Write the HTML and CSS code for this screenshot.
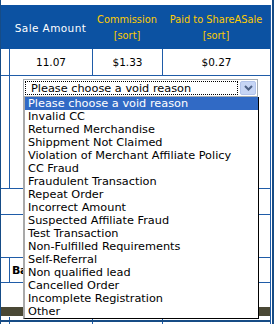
FILE: index.html
```html
<!DOCTYPE html>
<html lang="en">
<head>
	<meta charset="UTF-8">
	<title>Void Transaction</title>
	<link rel="stylesheet" href="styles.css">
</head>
<body>
	<div class="frame">
		<div class="grid">
			<div class="row head">
				<div class="cell c0"></div>
				<div class="cell c1"><span class="head__plain">Sale Amount</span></div>
				<div class="cell c2"><a class="head__sort">Commission<br>[sort]</a></div>
				<div class="cell c3"><a class="head__sort">Paid to ShareASale<br>[sort]</a></div>
			</div>
			<div class="row data">
				<div class="cell c0"></div>
				<div class="cell c1">11.07</div>
				<div class="cell c2">$1.33</div>
				<div class="cell c3">$0.27</div>
			</div>
			<div class="row void">
				<div class="cell c0"></div>
				<div class="cell wide">
					<div class="select">
						<div class="select__value">Please choose a void reason</div>
						<div class="select__btn">
							<svg width="9" height="6" viewBox="0 0 9 6"><path d="M1 1 L4.5 4.5 L8 1" fill="none" stroke="#4d6185" stroke-width="2"/></svg>
						</div>
					</div>
				</div>
			</div>
			<div class="row blank r3"></div>
			<div class="row blank r4"></div>
			<div class="row total">
				<div class="cell c0"></div>
				<div class="cell wide total__cell"><span class="total__label">Ba</span></div>
			</div>
			<div class="row blank r6"></div>
			<div class="bar"></div>
			<div class="row tail tail--first">
				<div class="cell c0"></div>
				<div class="cell c1"></div>
				<div class="cell c2"></div>
				<div class="cell c3"></div>
			</div>
			<div class="row tail">
				<div class="cell c0"></div>
				<div class="cell c1"></div>
				<div class="cell c2"></div>
				<div class="cell c3"></div>
			</div>
		</div>

		<ul class="options">
			<li class="options__item options__item--active">Please choose a void reason</li>
			<li class="options__item">Invalid CC</li>
			<li class="options__item">Returned Merchandise</li>
			<li class="options__item">Shippment Not Claimed</li>
			<li class="options__item">Violation of Merchant Affiliate Policy</li>
			<li class="options__item">CC Fraud</li>
			<li class="options__item">Fraudulent Transaction</li>
			<li class="options__item">Repeat Order</li>
			<li class="options__item">Incorrect Amount</li>
			<li class="options__item">Suspected Affiliate Fraud</li>
			<li class="options__item">Test Transaction</li>
			<li class="options__item">Non-Fulfilled Requirements</li>
			<li class="options__item">Self-Referral</li>
			<li class="options__item">Non qualified lead</li>
			<li class="options__item">Cancelled Order</li>
			<li class="options__item">Incomplete Registration</li>
			<li class="options__item">Other</li>
		</ul>
	</div>
</body>
</html>
```

FILE: styles.css
```css
* {
	box-sizing: border-box;
}
body {
	margin: 0;
	background-color: #fff;
	font-family: "DejaVu Sans", Verdana, sans-serif;
	color: #000;
	overflow: hidden;
}
.frame {
	position: relative;
	width: 274px;
	height: 324px;
	padding-top: 5px;
	border-left: 1px solid #164c86;
	border-right: 2px solid #164c86;
	padding-right: 1px;
}
.grid {
	width: 270px;
	border-right: 1px solid #1f5ca8;
}
.row {
	display: flex;
	border-bottom: 1px solid #1f5ca8;
}
.cell {
	height: 100%;
	display: flex;
	align-items: center;
	justify-content: center;
	text-align: center;
}
.cell + .cell {
	border-left: 1px solid #1f5ca8;
}
.c0 {
	width: 8px;
}
.c1 {
	width: 83px;
}
.c2 {
	width: 70px;
}
.c3 {
	width: 108px;
}
.wide {
	flex: 1;
}

/* header */
.head {
	height: 44px;
	background-color: #0c52a2;
	border-bottom: none;
}
.head .cell + .cell {
	border-left: none;
}
.head__plain {
	color: #fff;
	font-size: 10.5px;
	letter-spacing: 0.4px;
	padding-top: 1px;
}
.head__sort {
	color: #ffcc00;
	font-size: 9.8px;
	line-height: 16px;
	padding-top: 2px;
}

/* rows */
.data {
	height: 27px;
	font-size: 10.5px;
}
.void {
	height: 113px;
}
.void .wide {
	align-items: flex-start;
	justify-content: flex-start;
}
.r3 {
	height: 26px;
}
.r4 {
	height: 43px;
}
.total {
	height: 25px;
}
.total__cell {
	justify-content: flex-start;
	padding-left: 2px;
}
.total__label {
	font-size: 11px;
	font-weight: bold;
	letter-spacing: -0.5px;
	white-space: nowrap;
}
.r6 {
	height: 24px;
	border-bottom: none;
}
.bar {
	height: 9px;
	background-color: #4a4835;
	margin-bottom: 1px;
}
.tail {
	height: 10px;
	border-bottom: none;
}
.tail--first {
	height: 5px;
	border-bottom: 2px solid #164c86;
}

/* select box */
.select {
	display: flex;
	width: 235px;
	height: 18px;
	margin: 3px 0 0 13px;
	padding: 1px;
	border: 1px solid #a5acb2;
	background-color: #fff;
}
.select__value {
	flex: 1;
	border: 1px dotted #000;
	font-size: 11.3px;
	line-height: 13px;
	text-align: left;
	padding-left: 5px;
}
.select__btn {
	width: 16px;
	margin-left: 2px;
	display: flex;
	align-items: center;
	justify-content: center;
	background-color: #c6d5f5;
	border: 1px solid #b2c3ea;
	border-radius: 2px;
}

/* opened list */
.options {
	position: absolute;
	left: 22px;
	top: 97px;
	width: 236px;
	margin: 0;
	padding: 0;
	list-style: none;
	background-color: #fff;
	border-left: 2px solid #a9a9a9;
	border-right: 1px solid #000;
	border-bottom: 1px solid #000;
}
.options__item {
	height: 13px;
	line-height: 13px;
	padding-left: 3px;
	font-size: 11.3px;
	white-space: nowrap;
}
.options__item--active {
	background-color: #316ac5;
	color: #fff;
}
```
